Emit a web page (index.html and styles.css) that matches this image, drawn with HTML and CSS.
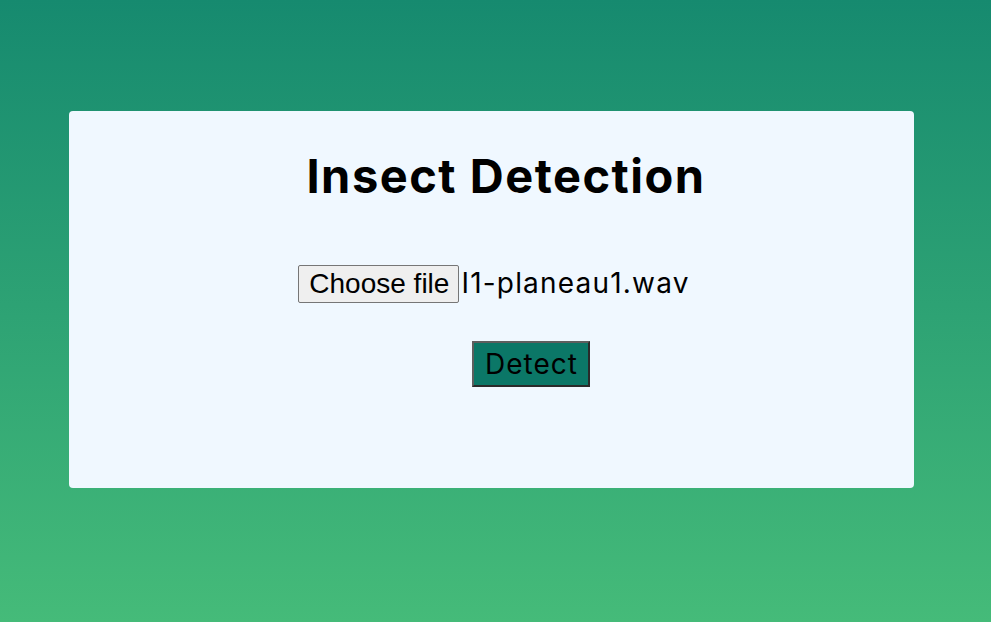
FILE: index.html
```html
<!DOCTYPE html>
<html lang="en">
<head>
<meta charset="utf-8">
<title>Insect Detection</title>
<link rel="stylesheet" href="styles.css">
</head>
<body>
  <main class="card">
    <h1 class="title">Insect Detection</h1>
    <form class="form">
      <div class="file-row">
        <span class="file-btn">Choose file</span>
        <span class="file-name">I1-planeau1.wav</span>
      </div>
      <button type="button" class="detect">Detect</button>
    </form>
  </main>
</body>
</html>
```

FILE: styles.css
```css
html, body {
  margin: 0;
  padding: 0;
}
body {
  min-height: 622px;
  background: linear-gradient(180deg, #168a6f 0%, #45bb79 100%);
  font-family: Inter, "Noto Sans", sans-serif;
  display: flex;
  flex-direction: column;
  box-sizing: border-box;
  padding: 111px 77px 0 69px;
}
.card {
  background: #f0f8ff;
  border-radius: 4px;
  height: 377px;
  box-sizing: border-box;
  padding-top: 41px;
  display: flex;
  flex-direction: column;
  align-items: center;
}
.title {
  margin: 0 0 0 29px;
  font-size: 47px;
  line-height: 47px;
  font-weight: 700;
  letter-spacing: 1.5px;
  color: #000;
}
.form {
  margin-top: 66px;
  display: flex;
  flex-direction: column;
  align-items: center;
}
.file-row {
  display: flex;
  align-items: baseline;
  gap: 2px;
  margin-left: 5px;
}
.file-btn {
  font-family: "Liberation Sans", Arial, sans-serif;
  font-size: 28px;
  line-height: 36px;
  padding: 0 9px 0 10px;
  background: #efefef;
  border: 1px solid #767676;
  border-radius: 2px;
  color: #000;
}
.file-name {
  font-size: 28px;
  letter-spacing: 1.2px;
  color: #000;
}
.detect {
  margin-top: 38px;
  margin-left: 79px;
  font-family: Inter, "Noto Sans", sans-serif;
  font-size: 28px;
  line-height: 42px;
  letter-spacing: 1px;
  padding: 0 10px 0 11px;
  background: #0b7767;
  color: #000;
  border-width: 2px;
  border-style: solid;
  border-color: #5e5e5e #2a2a2a #2a2a2a #5e5e5e;
}
```
